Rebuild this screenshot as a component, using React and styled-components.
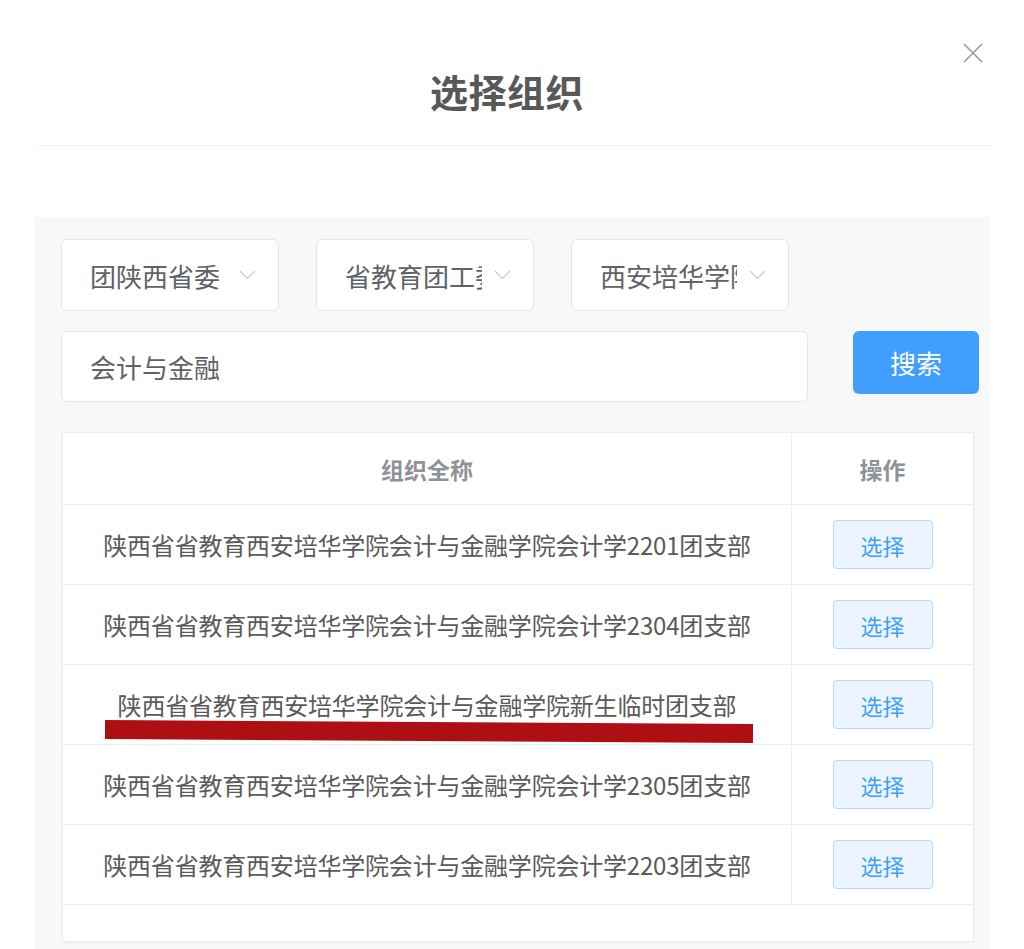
import React from 'react';
import styled, { createGlobalStyle } from 'styled-components';

const GlobalStyle = createGlobalStyle`
  html, body {
    margin: 0;
    padding: 0;
    background: #ffffff;
    font-family: "Noto Sans CJK SC", "Noto Sans", "Liberation Sans", sans-serif;
  }
  * { box-sizing: border-box; }
`

const Dialog = styled.div`
  width: 1024px;
  height: 949px;
  overflow: hidden;
  position: relative;
  background: #fff;
`

const Header = styled.div`
  margin: 0 34px 0 38px;
  height: 146px;
  border-bottom: 1px solid #efefef;
  text-align: center;
  padding-top: 72px;
`

const Title = styled.h1`
  margin: 0;
  font-size: 38px;
  line-height: 38px;
  font-weight: 700;
  color: #585858;
  letter-spacing: 0.5px;
  transform: translateX(-7px);
`

const Close = styled.button`
  position: absolute;
  top: 42px;
  right: 40px;
  width: 22px;
  height: 22px;
  padding: 0;
  border: none;
  background: transparent;
  cursor: pointer;
`

const Panel = styled.div`
  margin: 71px 34px 0 35px;
  background: #f6f8fa;
  padding: 22px 0 0 26px;
  height: 740px;
`

const SelectRow = styled.div`
  display: flex;
  gap: 37px;
`

const Select = styled.div`
  width: 218px;
  height: 72px;
  background: #fff;
  border: 1px solid #e3e5e8;
  border-radius: 6px;
  display: flex;
  align-items: center;
  padding: 0 22px 0 28px;
`

const SelectText = styled.span`
  flex: 1;
  overflow: hidden;
  white-space: nowrap;
  font-size: 26px;
  color: #606266;
  margin-right: 12px;
`

const SearchRow = styled.div`
  display: flex;
  gap: 45px;
  margin-top: 20px;
  align-items: flex-start;
`

const Input = styled.div`
  flex: none;
  width: 747px;
  height: 71px;
  background: #fff;
  border: 1px solid #e3e5e8;
  border-radius: 6px;
  display: flex;
  align-items: center;
  padding-left: 28px;
  font-size: 26px;
  color: #606266;
`

const SearchButton = styled.button`
  flex: none;
  width: 126px;
  height: 63px;
  border: none;
  border-radius: 6px;
  background: #409eff;
  color: #fff;
  font-family: inherit;
  font-size: 26px;
  cursor: pointer;
`

const Table = styled.div`
  margin-top: 30px;
  margin-left: 1px;
  width: 912px;
  height: 510px;
  background: #fff;
  border: 1px solid #eceef2;
  box-shadow: 0 1px 3px rgba(0,0,0,0.04);
`

const Row = styled.div`
  display: grid;
  grid-template-columns: 729px 1fr;
  height: ${props => props.head ? 72 : 80}px;
  border-bottom: 1px solid #ebeef5;
`

const Cell = styled.div`
  position: relative;
  display: flex;
  align-items: center;
  justify-content: center;
  border-right: ${props => props.last ? 'none' : '1px solid #ebeef5'};
  font-size: ${props => props.head ? 23 : 24}px;
  font-weight: ${props => props.head ? 700 : 400};
  color: ${props => props.head ? '#8f9296' : '#5a5a5a'};
  letter-spacing: ${props => props.head ? 0 : -0.2}px;
  white-space: nowrap;
`

const PickButton = styled.button`
  width: 100px;
  height: 49px;
  background: #ecf5ff;
  border: 1px solid #b3d8ff;
  border-radius: 4px;
  color: #409eff;
  font-family: inherit;
  font-size: 22px;
  cursor: pointer;
`

const Mark = styled.div`
  position: absolute;
  left: 42px;
  top: 57px;
  width: 648px;
  height: 19px;
  background: #ad0f12;
  transform: rotate(0.35deg);
`

const Chevron = () => (
  <svg width="17" height="10" viewBox="0 0 17 10">
    <path d="M1 1 L8.5 8.5 L16 1" fill="none" stroke="#c6c9cf" strokeWidth="1.2" />
  </svg>
)

const rows = [
  '陕西省省教育西安培华学院会计与金融学院会计学2201团支部',
  '陕西省省教育西安培华学院会计与金融学院会计学2304团支部',
  '陕西省省教育西安培华学院会计与金融学院新生临时团支部',
  '陕西省省教育西安培华学院会计与金融学院会计学2305团支部',
  '陕西省省教育西安培华学院会计与金融学院会计学2203团支部',
]

export default function App() {
  return (
    <Dialog>
      <GlobalStyle />
      <Header>
        <Title>选择组织</Title>
      </Header>
      <Close aria-label="close">
        <svg width="22" height="22" viewBox="0 0 22 22">
          <path d="M2 2 L20 20 M20 2 L2 20" stroke="#9a9a9a" strokeWidth="1.6" />
        </svg>
      </Close>
      <Panel>
        <SelectRow>
          <Select><SelectText>团陕西省委</SelectText><Chevron /></Select>
          <Select><SelectText>省教育团工委</SelectText><Chevron /></Select>
          <Select><SelectText>西安培华学院</SelectText><Chevron /></Select>
        </SelectRow>
        <SearchRow>
          <Input>会计与金融</Input>
          <SearchButton>搜索</SearchButton>
        </SearchRow>
        <Table>
          <Row head>
            <Cell head>组织全称</Cell>
            <Cell head last>操作</Cell>
          </Row>
          {rows.map((name, i) => (
            <Row key={i}>
              <Cell>
                {name}
                {i === 2 && <Mark />}
              </Cell>
              <Cell last><PickButton>选择</PickButton></Cell>
            </Row>
          ))}
        </Table>
      </Panel>
    </Dialog>
  )
}
